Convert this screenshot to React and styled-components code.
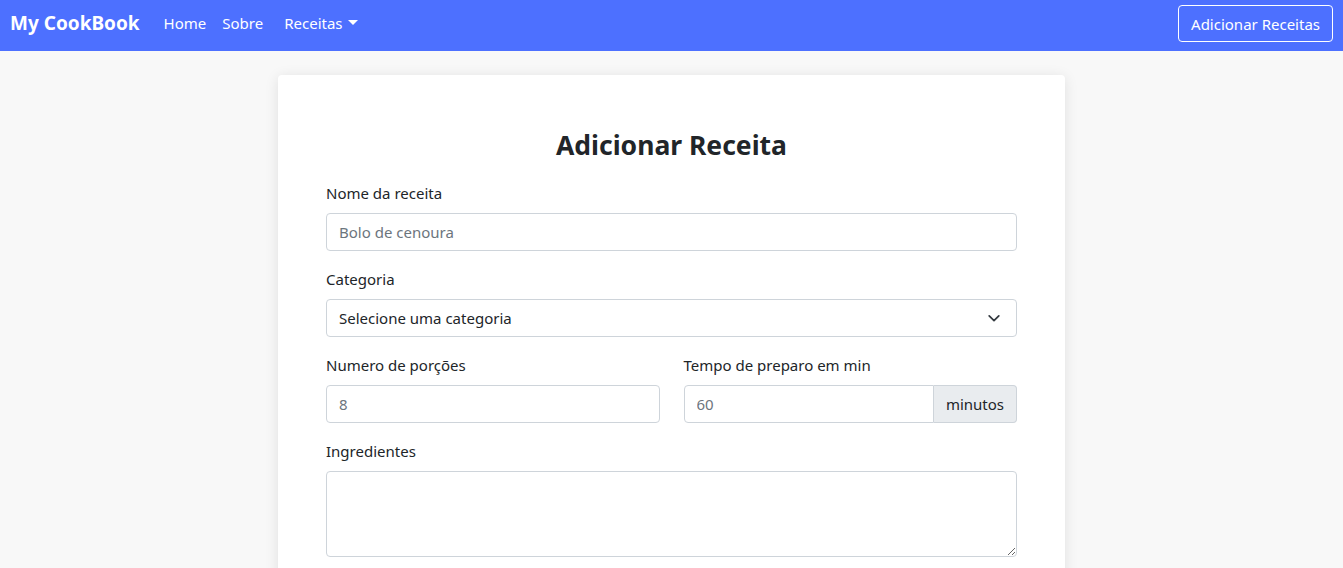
import React from 'react'
import styled, { createGlobalStyle } from 'styled-components'

const GlobalStyle = createGlobalStyle`
  * {
    box-sizing: border-box;
  }
  body {
    margin: 0;
    background: #f8f8f8;
    color: #212529;
    font-family: "Noto Sans", "Open Sans", sans-serif;
    font-size: 15px;
    line-height: 1.5;
  }
`

const Navbar = styled.nav`
  height: 51px;
  background: #4d70ff;
  display: flex;
  align-items: center;
  padding: 0 10px 4px;
`

const Brand = styled.a`
  color: #fff;
  font-size: 19px;
  font-weight: 700;
  margin-right: 24px;
  white-space: nowrap;
`

const NavLink = styled.a`
  color: #fff;
  font-size: 15px;
  margin-right: ${p => p.gap || 16}px;
  display: flex;
  align-items: center;
  gap: 5px;
`

const Caret = styled.span`
  width: 0;
  height: 0;
  border-left: 5px solid transparent;
  border-right: 5px solid transparent;
  border-top: 5px solid #fff;
  margin-top: -2px;
`

const Spacer = styled.div`
  flex: 1;
`

const OutlineButton = styled.button`
  font-family: inherit;
  font-size: 15px;
  color: #fff;
  background: transparent;
  border: 1px solid #fff;
  border-radius: 4px;
  height: 37px;
  padding: 0 12px;
`

const Main = styled.main`
  display: flex;
  justify-content: center;
  padding-top: 24px;
`

const Card = styled.div`
  width: 787px;
  background: #fff;
  border-radius: 4px;
  box-shadow: 0 2px 14px rgba(0, 0, 0, 0.1);
  padding: 53px 48px 24px;
`

const Title = styled.h2`
  margin: 0 0 19px;
  text-align: center;
  font-size: 26.5px;
  font-weight: 700;
  line-height: 34px;
`

const Field = styled.div`
  margin-bottom: 16px;
`

const Label = styled.label`
  display: block;
  margin-bottom: 8px;
  line-height: 24px;
`

const Control = styled.input`
  display: block;
  width: 100%;
  height: 38px;
  padding: 6px 12px;
  font-family: inherit;
  font-size: 15px;
  color: #212529;
  border: 1px solid #ced4da;
  border-radius: 4px;
  background: #fff;
  &::placeholder {
    color: #6c757d;
  }
`

const SelectBox = styled.div`
  display: flex;
  align-items: center;
  justify-content: space-between;
  height: 38px;
  padding: 0 15px 0 12px;
  border: 1px solid #ced4da;
  border-radius: 4px;
  background: #fff;
`

const Row = styled.div`
  display: grid;
  grid-template-columns: 1fr 1fr;
  column-gap: 24px;
`

const InputGroup = styled.div`
  display: flex;
  & > input {
    border-radius: 4px 0 0 4px;
    flex: 1;
  }
`

const Addon = styled.span`
  display: flex;
  align-items: center;
  padding: 0 12px;
  background: #e9ecef;
  border: 1px solid #ced4da;
  border-left: none;
  border-radius: 0 4px 4px 0;
  white-space: nowrap;
`

const TextArea = styled.textarea`
  display: block;
  width: 100%;
  height: 86px;
  padding: 6px 12px;
  font-family: inherit;
  font-size: 15px;
  border: 1px solid #ced4da;
  border-radius: 4px;
`

const Chevron = () => (
  <svg width="14" height="14" viewBox="0 0 16 16" fill="none" stroke="#343a40" strokeWidth="2" strokeLinecap="round" strokeLinejoin="round">
    <path d="M2.5 5.5l5.5 5.5 5.5-5.5" />
  </svg>
)

export default function App() {
  return (
    <>
      <GlobalStyle />
      <Navbar>
        <Brand>My CookBook</Brand>
        <NavLink>Home</NavLink>
        <NavLink gap={21}>Sobre</NavLink>
        <NavLink>Receitas <Caret /></NavLink>
        <Spacer />
        <OutlineButton>Adicionar Receitas</OutlineButton>
      </Navbar>
      <Main>
        <Card>
          <Title>Adicionar Receita</Title>
          <Field>
            <Label>Nome da receita</Label>
            <Control placeholder="Bolo de cenoura" />
          </Field>
          <Field>
            <Label>Categoria</Label>
            <SelectBox>
              <span>Selecione uma categoria</span>
              <Chevron />
            </SelectBox>
          </Field>
          <Row>
            <Field>
              <Label>Numero de porções</Label>
              <Control placeholder="8" />
            </Field>
            <Field>
              <Label>Tempo de preparo em min</Label>
              <InputGroup>
                <Control placeholder="60" />
                <Addon>minutos</Addon>
              </InputGroup>
            </Field>
          </Row>
          <Field>
            <Label>Ingredientes</Label>
            <TextArea />
          </Field>
        </Card>
      </Main>
    </>
  )
}
